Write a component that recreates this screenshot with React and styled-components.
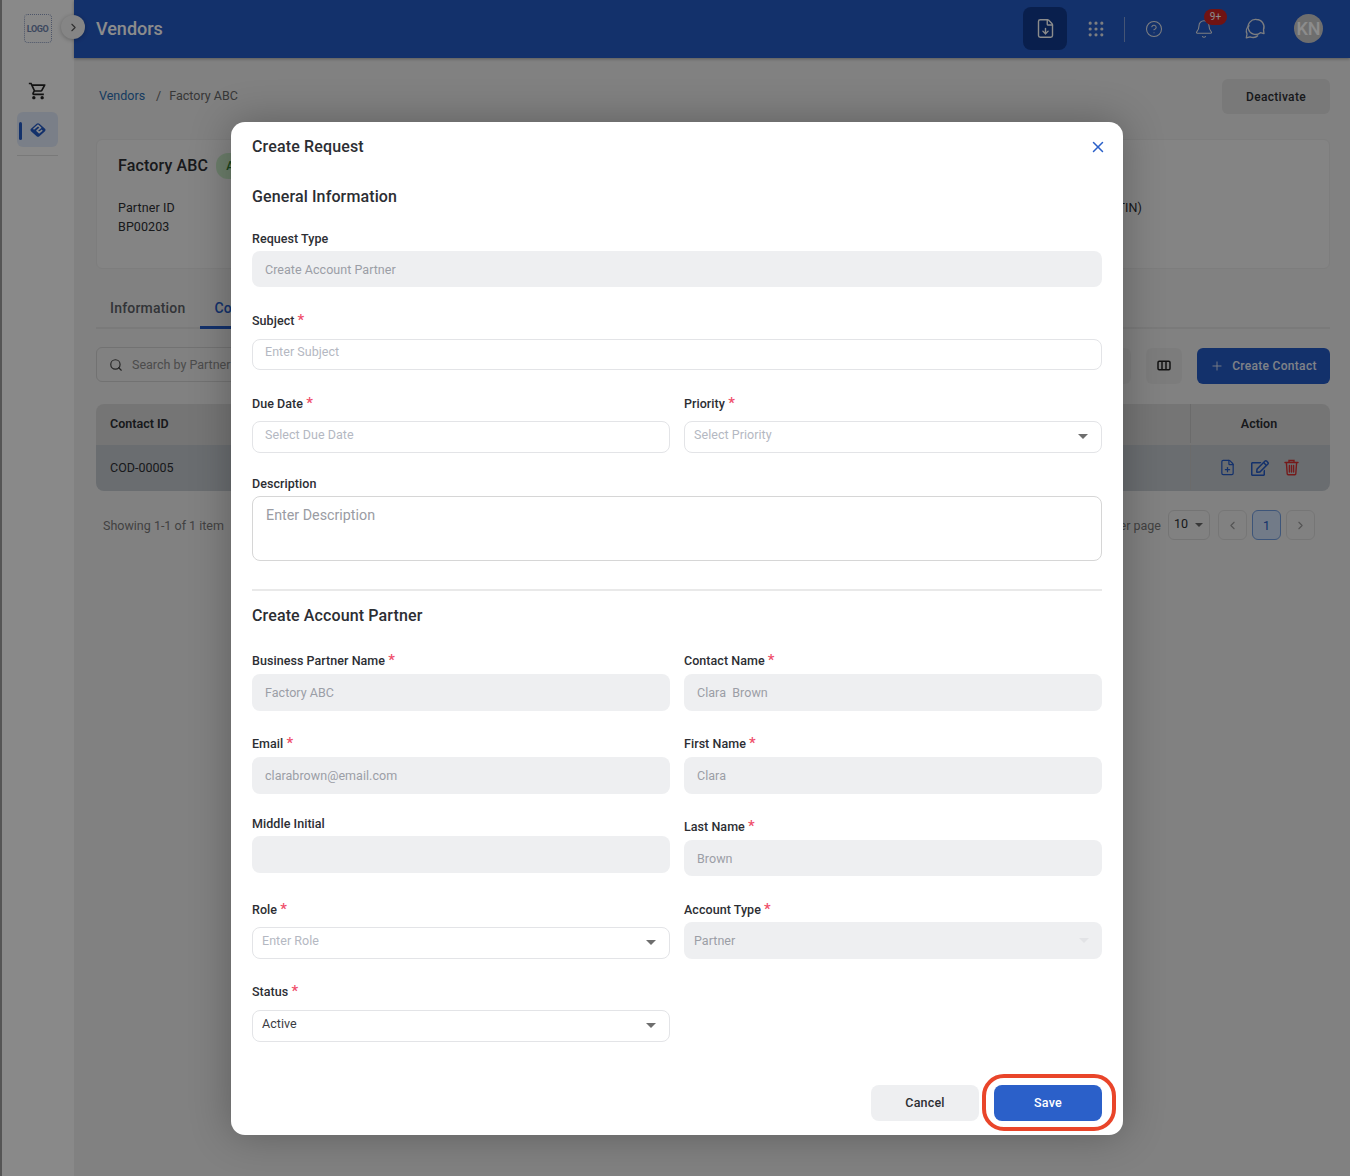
import styled, { createGlobalStyle } from "styled-components";
import {
  ChevronLeft,
  ChevronRight,
  CircleHelp,
  Bell,
  FileDown,
  FilePlus,
  Grip,
  ListFilter,
  Plus,
  Search,
  X,
} from "lucide-react";
import { FaRegEdit } from "react-icons/fa";
import { MdOutlineShoppingCart } from "react-icons/md";

const GlobalStyle = createGlobalStyle`
  html, body { margin: 0; padding: 0; }
  body {
    font-family: Roboto, "Liberation Sans", sans-serif;
    color: #2c2e33;
    background: #ebebeb;
  }
  * { box-sizing: border-box; }
`;

const Shell = styled.div`
  position: relative;
  display: flex;
  width: 1350px;
  height: 1176px;
  overflow: hidden;
  border-left: 2px solid #555;
`;

// ── sidebar ────────────────────────────────────────────────
const Sidebar = styled.aside`
  width: 72px;
  flex: none;
  background: #f9f9f9;
  display: flex;
  flex-direction: column;
  align-items: center;
  padding: 14px 1px 0 0;
`;

const Logo = styled.div`
  width: 28px;
  height: 29px;
  border: 1.5px dotted #8d9cc0;
  border-radius: 4px;
  display: flex;
  align-items: center;
  justify-content: center;
  font-size: 9px;
  font-weight: 700;
  letter-spacing: -0.4px;
  color: #6f83ad;
`;

const SideItem = styled.div`
  position: relative;
  width: 41px;
  height: 35px;
  margin-top: ${({ $top }) => $top}px;
  border-radius: 6px;
  display: flex;
  align-items: center;
  justify-content: center;
  color: #222;
  background: ${({ $active }) => ($active ? "#dfe8f7" : "transparent")};
  ${({ $active }) =>
    $active &&
    `&::before {
      content: "";
      position: absolute;
      left: 2px;
      top: 10px;
      width: 3px;
      height: 18px;
      border-radius: 2px;
      background: #2459c3;
    }`}
`;

const SideRule = styled.div`
  width: 41px;
  height: 1px;
  margin-top: 8px;
  background: #dcdcdc;
`;

const Toggle = styled.button`
  position: absolute;
  left: 59px;
  top: 15px;
  width: 24px;
  height: 24px;
  padding: 0;
  border: 0;
  border-radius: 50%;
  background: #f2f2f2;
  box-shadow: 0 1px 4px rgba(0, 0, 0, 0.25);
  display: flex;
  align-items: center;
  justify-content: center;
  color: #555;
  z-index: 2;
`;

// ── header ─────────────────────────────────────────────────
const Main = styled.main`
  flex: 1;
  min-width: 0;
  display: flex;
  flex-direction: column;
`;

const TopBar = styled.header`
  height: 58px;
  flex: none;
  background: #2459c3;
  box-shadow: 0 1px 3px rgba(0, 0, 0, 0.3);
  display: flex;
  align-items: center;
  justify-content: space-between;
  padding: 0 27px 0 22px;
`;

const AppTitle = styled.h1`
  margin: 0 0 2px;
  font-size: 18px;
  font-weight: 500;
  color: #fff;
`;

const TopActions = styled.div`
  display: flex;
  align-items: center;
`;

const DownloadButton = styled.div`
  width: 44px;
  height: 43px;
  margin-top: -1px;
  border-radius: 8px;
  background: #123a8c;
  color: #fff;
  display: flex;
  align-items: center;
  justify-content: center;
`;

const IconSlot = styled.div`
  position: relative;
  width: 24px;
  height: 24px;
  margin-left: ${({ $ml }) => $ml}px;
  color: #e4e6ea;
  display: flex;
  align-items: center;
  justify-content: center;
`;

const TopRule = styled.div`
  width: 1px;
  height: 25px;
  margin-left: 16px;
  background: #7f9bd6;
`;

const Badge = styled.span`
  position: absolute;
  left: 12px;
  top: -8px;
  width: 23px;
  height: 16px;
  border-radius: 8px;
  background: #cc2424;
  color: #fff;
  font-size: 10px;
  line-height: 16px;
  text-align: center;
`;

const Avatar = styled.div`
  width: 29px;
  height: 29px;
  margin: -1px 0 0 27px;
  border-radius: 50%;
  background: #c9c9c9;
  color: #fff;
  font-size: 18px;
  font-weight: 500;
  display: flex;
  align-items: center;
  justify-content: center;
`;

// ── page behind the dialog ─────────────────────────────────
const Content = styled.div`
  padding: 21px 20px 0 22px;
  display: flex;
  flex-direction: column;
`;

const CrumbRow = styled.div`
  height: 35px;
  display: flex;
  align-items: center;
  justify-content: space-between;
  padding-left: 3px;
  font-size: 12.5px;
  color: #666;
`;

const Crumbs = styled.div`
  margin-top: -2px;
`;

const CrumbLink = styled.span`
  color: #2a6db0;
  margin-right: 11px;
`;

const CrumbSep = styled.span`
  margin-right: 8px;
`;

const GreyButton = styled.div`
  width: 108px;
  height: 35px;
  border-radius: 6px;
  background: #dcdcdc;
  color: #2c2e33;
  font-size: 12px;
  font-weight: 500;
  letter-spacing: 0.3px;
  display: flex;
  align-items: center;
  justify-content: center;
`;

const PartnerCard = styled.section`
  height: 130px;
  margin-top: 25px;
  padding: 13px 21px;
  border: 1px solid #e4e4e4;
  border-radius: 6px;
  background: #f0f0f0;
`;

const CardHead = styled.div`
  display: flex;
  align-items: center;
  gap: 8px;
  font-size: 16px;
  font-weight: 500;
  letter-spacing: 0.15px;
  line-height: 22px;
`;

const StatusPill = styled.span`
  padding: 2px 10px;
  border-radius: 12px;
  background: #c5e6c4;
  color: #2e7d32;
  font-size: 12px;
`;

const InfoRow = styled.div`
  display: grid;
  grid-template-columns: 1fr auto;
  margin-top: 19px;
  font-size: 12.5px;
  letter-spacing: 0.1px;
  line-height: 19px;
`;

const TaxLabel = styled.div`
  margin-right: 166px;
`;

const Tabs = styled.div`
  display: flex;
  height: 40px;
  margin-top: 20px;
  border-bottom: 2px solid #dedede;
`;

const Tab = styled.div`
  height: 40px;
  padding: 0 14px 0 ${({ $active }) => ($active ? 15 : 14)}px;
  line-height: 38px;
  font-size: 14px;
  font-weight: 500;
  letter-spacing: 0.2px;
  color: ${({ $active }) => ($active ? "#2459c3" : "#5c5f66")};
  border-bottom: 3px solid ${({ $active }) => ($active ? "#2459c3" : "transparent")};
`;

const Toolbar = styled.div`
  display: flex;
  align-items: center;
  gap: 15px;
  margin-top: 18px;
  height: 37px;
`;

const SearchBox = styled.div`
  align-self: flex-start;
  width: 400px;
  height: 35px;
  margin-right: auto;
  padding: 0 12px;
  border: 1px solid #cfcfcf;
  border-radius: 6px;
  display: flex;
  align-items: center;
  gap: 9px;
  font-size: 12.5px;
  color: #8a8a8a;
`;

const ToolIcon = styled.div`
  width: 36px;
  height: 36px;
  border-radius: 6px;
  background: #e2e2e2;
  color: #222;
  display: flex;
  align-items: center;
  justify-content: center;
`;

const PrimaryButton = styled.div`
  width: 133px;
  height: 36px;
  border-radius: 6px;
  background: #2459c3;
  color: #e8edf7;
  font-size: 12px;
  font-weight: 500;
  letter-spacing: 0.3px;
  display: flex;
  align-items: center;
  justify-content: center;
  gap: 8px;
`;

const Table = styled.div`
  margin-top: 20px;
  border-radius: 8px;
  overflow: hidden;
  font-size: 12.5px;
`;

const TableRow = styled.div`
  display: grid;
  grid-template-columns: 1fr 140px;
  height: ${({ $head }) => ($head ? 41 : 46)}px;
  padding-bottom: ${({ $head }) => ($head ? 2 : 1)}px;
  background: ${({ $head }) => ($head ? "#d6d6d6" : "#c1c6cc")};
  font-weight: ${({ $head }) => ($head ? 600 : 400)};
`;

const Cell = styled.div`
  display: flex;
  align-items: center;
  padding-left: 14px;
`;

const ActionCell = styled.div`
  display: flex;
  align-items: center;
  justify-content: center;
  gap: 15px;
  border-left: 1px solid #c4c4c4;
  padding-right: 3px;
`;

const RowIcon = styled.span`
  display: flex;
  color: ${({ $danger }) => ($danger ? "#d63030" : "#2459c3")};
`;

const Pager = styled.div`
  display: flex;
  align-items: center;
  height: 30px;
  margin-top: 19px;
  padding: 0 15px 0 7px;
  font-size: 12.5px;
  color: #777;
`;

const PerPage = styled.span`
  margin-left: auto;
  margin-right: 7px;
`;

const PageSize = styled.div`
  position: relative;
  width: 42px;
  height: 30px;
  margin-right: 8px;
  padding-left: 5px;
  border: 1px solid #d4d4d4;
  border-radius: 6px;
  line-height: 26px;
  color: #2c2e33;
  &::after {
    content: "";
    position: absolute;
    right: 6px;
    top: 12px;
    border: 4px solid transparent;
    border-top: 4px solid #666;
  }
`;

const PageButton = styled.div`
  width: 29px;
  height: 30px;
  margin-left: ${({ $ml }) => $ml ?? 0}px;
  border: 1px solid ${({ $active }) => ($active ? "#6f9bdd" : "#d8d8d8")};
  border-radius: 6px;
  background: ${({ $active }) => ($active ? "#cfe0f7" : "transparent")};
  color: ${({ $active }) => ($active ? "#2459c3" : "#999")};
  display: flex;
  align-items: center;
  justify-content: center;
`;

// ── dialog ─────────────────────────────────────────────────
const Overlay = styled.div`
  position: absolute;
  inset: 0 0 0 -2px;
  z-index: 5;
  background: rgba(0, 0, 0, 0.45);
  display: flex;
  align-items: flex-start;
  padding: 122px 0 0 231px;
`;

const Dialog = styled.div`
  position: relative;
  width: 892px;
  height: 1013px;
  padding: 15px 21px;
  border-radius: 14px;
  background: #fff;
  box-shadow: 0 0 40px rgba(0, 0, 0, 0.28);
`;

const DialogHead = styled.div`
  height: 20px;
  display: flex;
  align-items: center;
  justify-content: space-between;
`;

const DialogTitle = styled.h2`
  margin: 0;
  font-size: 16px;
  font-weight: 500;
  line-height: 20px;
  letter-spacing: 0.15px;
  color: #2c2e33;
`;

const CloseIcon = styled.div`
  display: flex;
  color: #2b60c9;
  margin: 0 -5px 0 0;
`;

const SectionTitle = styled.h3`
  margin: ${({ $top }) => $top}px 0 0;
  font-size: 16px;
  font-weight: 500;
  line-height: 20px;
  letter-spacing: 0.12px;
  color: #2c2e33;
`;

const Row = styled.div`
  display: grid;
  grid-template-columns: ${({ $one }) => ($one ? "1fr" : "418px 418px")};
  column-gap: 14px;
  align-items: start;
  margin-top: ${({ $top }) => $top}px;
`;

const Field = styled.div`
  display: flex;
  flex-direction: column;
  gap: ${({ $gap }) => $gap ?? 5}px;
  margin-top: ${({ $top }) => $top ?? 0}px;
`;

const Label = styled.label`
  display: block;
  height: 16px;
  font-size: 12.5px;
  font-weight: 500;
  line-height: 18px;
  letter-spacing: 0.05px;
  color: #2c2e33;
`;

const Star = styled.span`
  font-size: 15px;
  line-height: 0;
  color: #ef4f6b;
`;

const Filled = styled.div`
  position: relative;
  height: ${({ $h }) => $h ?? 37}px;
  padding-left: ${({ $pad }) => $pad ?? 13}px;
  border-radius: 8px;
  background: #eeeff1;
  color: #9b9ea6;
  font-size: 12.5px;
  letter-spacing: 0.04px;
  display: flex;
  align-items: center;
`;

const Outlined = styled.div`
  position: relative;
  height: ${({ $h }) => $h ?? 32}px;
  padding: 0 0 6px ${({ $pad }) => $pad ?? 12}px;
  border: 1px solid #e3e4e7;
  border-radius: 8px;
  background: #fff;
  color: ${({ $filled }) => ($filled ? "#3a3c42" : "#b4b8c2")};
  font-size: 12.5px;
  letter-spacing: 0.04px;
  display: flex;
  align-items: center;
`;

const Caret = styled.span`
  position: absolute;
  right: 13px;
  top: 50%;
  margin-top: -3px;
  border-left: 5px solid transparent;
  border-right: 5px solid transparent;
  border-top: 5px solid ${({ $light }) => ($light ? "#e2e3e6" : "#6e6e6e")};
`;

const TextArea = styled.div`
  height: 65px;
  padding: 8px 13px;
  border: 1.5px solid #d6d6d6;
  border-radius: 8px;
  color: #9a9ca3;
  font-size: 14.3px;
  line-height: 20px;
`;

const Rule = styled.div`
  height: 2px;
  margin-top: 28px;
  background: #e9e9e9;
`;

const Footer = styled.div`
  display: flex;
  justify-content: flex-end;
  gap: 15px;
  margin-top: 43px;
`;

const Action = styled.button`
  width: 108px;
  height: 36px;
  padding: 0 0 2px;
  border: 0;
  border-radius: 8px;
  font-family: inherit;
  font-size: 12.5px;
  font-weight: 500;
  letter-spacing: 0.2px;
  background: ${({ $primary }) => ($primary ? "#2b60c9" : "#eeeff1")};
  color: ${({ $primary }) => ($primary ? "#fff" : "#2c2e33")};
`;

// hand-drawn red ring from the annotation on the screenshot
const Highlight = styled.div`
  position: absolute;
  left: 751px;
  top: 952px;
  width: 134px;
  height: 57px;
  border: 4px solid #e9452a;
  border-radius: 22px;
  pointer-events: none;
`;

const PartnerIcon = () => (
  <svg width="18" height="16" viewBox="0 0 18 16" fill="none">
    <path
      d="M9 1.2c.6 0 1 .2 1.4.6l5.6 5c.7.7.7 1.7 0 2.4l-5.6 5c-.8.7-2 .7-2.8 0L2 9.2c-.7-.7-.7-1.7 0-2.4l5.6-5c.4-.4.8-.6 1.4-.6Z"
      fill="#2459c3"
    />
    <path d="M4.5 7.2 9 3.4l2.6 2.3L8 8.6l2.2 2 3-2.5" stroke="#f3f6fb" strokeWidth="1.5" strokeLinejoin="round" />
  </svg>
);

const ChatIcon = () => (
  <svg width="22" height="22" viewBox="0 0 22 22" fill="none" stroke="currentColor" strokeWidth="1.3" strokeLinejoin="round">
    <path d="M12.5 1.5a7.5 7.5 0 0 1 7 10.3L20 15.6l-3.6-.9A7.5 7.5 0 1 1 12.5 1.5Z" />
    <path d="M5.5 7.5C2.5 9.5 1.5 13 3 16l-.7 3.8L6 18.8c3 1.2 6 .7 8-1.3" />
  </svg>
);

const ColumnsIcon = () => (
  <svg width="14" height="11" viewBox="0 0 14 11" fill="none" stroke="currentColor" strokeWidth="1.5">
    <rect x="1" y="1.2" width="12" height="8.6" rx="1.2" />
    <path d="M5 1.2v8.6M9 1.2v8.6" />
  </svg>
);

const TrashIcon = () => (
  <svg width="15" height="17" viewBox="0 0 15 17" fill="none" stroke="currentColor" strokeWidth="1.4" strokeLinecap="round">
    <path d="M1 3.5h13M5 3.3V1.5h5v1.8" />
    <path d="M2.4 3.6l.8 11.2c0 .6.5 1 1 1h6.6c.5 0 1-.4 1-1l.8-11.2" />
    <path d="M5.4 6.5v6.5M7.5 6.5v6.5M9.6 6.5v6.5" />
  </svg>
);

const req = <Star>*</Star>;

export default function App() {
  return (
    <>
      <GlobalStyle />
      <Shell>
        <Sidebar>
          <Logo>LOGO</Logo>
          <SideItem $top={30}>
            <MdOutlineShoppingCart size={20} />
          </SideItem>
          <SideItem $active $top={4}>
            <PartnerIcon />
          </SideItem>
          <SideRule />
        </Sidebar>
        <Toggle>
          <ChevronRight size={13} />
        </Toggle>
        <Main>
          <TopBar>
            <AppTitle>Vendors</AppTitle>
            <TopActions>
              <DownloadButton>
                <FileDown size={21} strokeWidth={1.6} />
              </DownloadButton>
              <IconSlot $ml={17}>
                <Grip size={20} strokeWidth={1.8} />
              </IconSlot>
              <TopRule />
              <IconSlot $ml={17}>
                <CircleHelp size={18} strokeWidth={1.4} />
              </IconSlot>
              <IconSlot $ml={26}>
                <Bell size={20} strokeWidth={1.3} />
                <Badge>9+</Badge>
              </IconSlot>
              <IconSlot $ml={27}>
                <ChatIcon />
              </IconSlot>
              <Avatar>KN</Avatar>
            </TopActions>
          </TopBar>
          <Content>
            <CrumbRow>
              <Crumbs>
                <CrumbLink>Vendors</CrumbLink>
                <CrumbSep>/</CrumbSep>
                Factory ABC
              </Crumbs>
              <GreyButton>Deactivate</GreyButton>
            </CrumbRow>
            <PartnerCard>
              <CardHead>
                Factory ABC <StatusPill>Active</StatusPill>
              </CardHead>
              <InfoRow>
                <div>
                  Partner ID
                  <br />
                  BP00203
                </div>
                <TaxLabel>Tax ID (TIN)</TaxLabel>
              </InfoRow>
            </PartnerCard>
            <Tabs>
              <Tab>Information</Tab>
              <Tab $active>Contacts</Tab>
            </Tabs>
            <Toolbar>
              <SearchBox>
                <Search size={14} color="#444" />
                Search by Partner ID
              </SearchBox>
              <ToolIcon>
                <ListFilter size={15} />
              </ToolIcon>
              <ToolIcon>
                <ColumnsIcon />
              </ToolIcon>
              <PrimaryButton>
                <Plus size={14} strokeWidth={1.5} /> Create Contact
              </PrimaryButton>
            </Toolbar>
            <Table>
              <TableRow $head>
                <Cell>Contact ID</Cell>
                <ActionCell>Action</ActionCell>
              </TableRow>
              <TableRow>
                <Cell>COD-00005</Cell>
                <ActionCell>
                  <RowIcon>
                    <FilePlus size={17} strokeWidth={1.7} />
                  </RowIcon>
                  <RowIcon>
                    <FaRegEdit size={18} />
                  </RowIcon>
                  <RowIcon $danger>
                    <TrashIcon />
                  </RowIcon>
                </ActionCell>
              </TableRow>
            </Table>
            <Pager>
              Showing 1-1 of 1 item
              <PerPage>Items per page</PerPage>
              <PageSize>10</PageSize>
              <PageButton>
                <ChevronLeft size={13} />
              </PageButton>
              <PageButton $active $ml={5}>
                1
              </PageButton>
              <PageButton $ml={5}>
                <ChevronRight size={13} />
              </PageButton>
            </Pager>
          </Content>
        </Main>

        <Overlay>
          <Dialog>
            <DialogHead>
              <DialogTitle>Create Request</DialogTitle>
              <CloseIcon>
                <X size={18} strokeWidth={2} />
              </CloseIcon>
            </DialogHead>

            <SectionTitle $top={30}>General Information</SectionTitle>
            <Row $one $top={23}>
              <Field>
                <Label>Request Type</Label>
                <Filled $h={36}>Create Account Partner</Filled>
              </Field>
            </Row>
            <Row $one $top={25}>
              <Field $gap={11}>
                <Label>Subject {req}</Label>
                <Outlined $h={31}>Enter Subject</Outlined>
              </Field>
            </Row>
            <Row $top={25}>
              <Field $gap={10}>
                <Label>Due Date {req}</Label>
                <Outlined>Select Due Date</Outlined>
              </Field>
              <Field $gap={10}>
                <Label>Priority {req}</Label>
                <Outlined $pad={9}>
                  Select Priority
                  <Caret />
                </Outlined>
              </Field>
            </Row>
            <Row $one $top={22}>
              <Field>
                <Label>Description</Label>
                <TextArea>Enter Description</TextArea>
              </Field>
            </Row>
            <Rule />

            <SectionTitle $top={15}>Create Account Partner</SectionTitle>
            <Row $top={26}>
              <Field $gap={6}>
                <Label>Business Partner Name {req}</Label>
                <Filled>Factory ABC</Filled>
              </Field>
              <Field $gap={6}>
                <Label>Contact Name {req}</Label>
                <Filled>Clara&nbsp; Brown</Filled>
              </Field>
            </Row>
            <Row $top={24}>
              <Field $gap={6}>
                <Label>Email {req}</Label>
                <Filled>clarabrown@email.com</Filled>
              </Field>
              <Field $gap={6}>
                <Label>First Name {req}</Label>
                <Filled>Clara</Filled>
              </Field>
            </Row>
            <Row $top={21}>
              <Field>
                <Label>Middle Initial</Label>
                <Filled />
              </Field>
              <Field $gap={6} $top={3}>
                <Label>Last Name {req}</Label>
                <Filled $h={36}>Brown</Filled>
              </Field>
            </Row>
            <Row $top={25}>
              <Field $gap={10}>
                <Label>Role {req}</Label>
                <Outlined $pad={9}>
                  Enter Role
                  <Caret />
                </Outlined>
              </Field>
              <Field>
                <Label>Account Type {req}</Label>
                <Filled $pad={10}>
                  Partner
                  <Caret $light />
                </Filled>
              </Field>
            </Row>
            <Row $top={24}>
              <Field $gap={11}>
                <Label>Status {req}</Label>
                <Outlined $pad={9} $filled>
                  Active
                  <Caret />
                </Outlined>
              </Field>
            </Row>

            <Footer>
              <Action>Cancel</Action>
              <Action $primary>Save</Action>
            </Footer>
            <Highlight />
          </Dialog>
        </Overlay>
      </Shell>
    </>
  );
}
